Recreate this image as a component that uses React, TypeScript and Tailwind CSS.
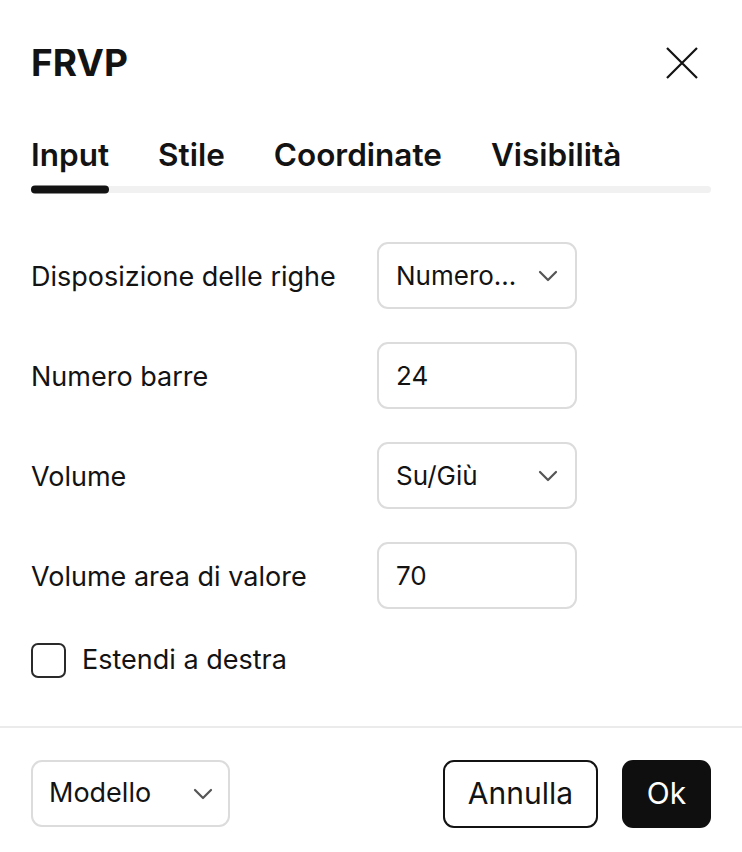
import React from "react";

function Chevron() {
  return (
    <svg width="20" height="12" viewBox="0 0 20 12" fill="none">
      <path d="M2 2l8 8 8-8" stroke="#555" strokeWidth="2.2" strokeLinecap="round" strokeLinejoin="round" />
    </svg>
  );
}

function SelectBox({ value }: { value: string }) {
  return (
    <div className="flex h-[67px] w-[200px] items-center justify-between rounded-[11px] border-2 border-[#dcdcdc] pl-[17px] pr-[17px]">
      <span className="text-[26px] text-[#131313]">{value}</span>
      <Chevron />
    </div>
  );
}

function InputBox({ value }: { value: string }) {
  return (
    <div className="flex h-[67px] w-[200px] items-center rounded-[11px] border-2 border-[#dcdcdc] pl-[17px]">
      <span className="text-[26px] text-[#131313]">{value}</span>
    </div>
  );
}

export default function App() {
  const rows: { label: string; kind: "select" | "input"; value: string }[] = [
    { label: "Disposizione delle righe", kind: "select", value: "Numero..." },
    { label: "Numero barre", kind: "input", value: "24" },
    { label: "Volume", kind: "select", value: "Su/Giù" },
    { label: "Volume area di valore", kind: "input", value: "70" },
  ];
  return (
    <div
      className="h-[852px] w-[742px] bg-white text-[#131313]"
      style={{ fontFamily: "Inter, 'Noto Sans', sans-serif" }}
    >
      <div className="flex items-center justify-between pl-[31px] pr-[44px] pt-[40px]">
        <h1 className="text-[37px] font-bold leading-[46px]">FRVP</h1>
        <svg width="32" height="32" viewBox="0 0 32 32" fill="none">
          <path d="M1 1l30 30M31 1L1 31" stroke="#131313" strokeWidth="2.2" />
        </svg>
      </div>

      <div className="px-[31px] pt-[49px]">
        <div className="flex gap-[49px] text-[31.5px] font-semibold leading-[40px]">
          <span>Input</span>
          <span>Stile</span>
          <span>Coordinate</span>
          <span>Visibilità</span>
        </div>
        <div className="mt-[11px] h-[7px] w-full rounded-full bg-[#f1f1f1]">
          <div className="h-[8px] w-[78px] -translate-y-[0.5px] rounded-full bg-[#131313]" />
        </div>
      </div>

      <div className="flex flex-col gap-[33px] px-[31px] pt-[49px]">
        {rows.map((r) => (
          <div key={r.label} className="flex items-center">
            <span className="w-[346px] pt-[4px] text-[27px]">{r.label}</span>
            {r.kind === "select" ? <SelectBox value={r.value} /> : <InputBox value={r.value} />}
          </div>
        ))}
      </div>

      <div className="flex items-center gap-[16px] px-[31px] pt-[31px]">
        <div className="h-[35px] w-[35px] rounded-[7px] border-2 border-[#2a2a2a]" />
        <span className="text-[27px]">Estendi a destra</span>
      </div>

      <div className="mt-[45px] h-[2px] w-full bg-[#ebebeb]" />

      <div className="flex items-center justify-between px-[31px] pt-[32px]">
        <div className="flex h-[67px] w-[199px] items-center justify-between rounded-[11px] border-2 border-[#dcdcdc] pl-[16px] pr-[15px]">
          <span className="text-[27px]">Modello</span>
          <Chevron />
        </div>
        <div className="flex gap-[24px]">
          <button className="flex h-[68px] w-[155px] items-center justify-center rounded-[11px] border-2 border-[#131313] text-[30px]">
            Annulla
          </button>
          <button className="flex h-[68px] w-[89px] items-center justify-center rounded-[11px] bg-[#0f0f0f] text-[30px] text-white">
            Ok
          </button>
        </div>
      </div>
    </div>
  );
}
